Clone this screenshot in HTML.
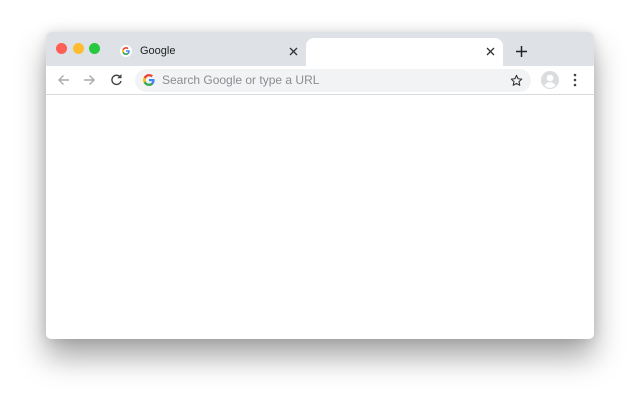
<!DOCTYPE html>
<html><head><meta charset="utf-8"><style>
*{margin:0;padding:0;box-sizing:border-box}
body{width:640px;height:400px;background:#fff;position:relative;overflow:hidden;font-family:"Liberation Sans",sans-serif}
.win{position:absolute;left:46px;top:32px;width:548px;height:307px;background:#fff;border-radius:5px;overflow:hidden;box-shadow:0 18px 30px rgba(0,0,0,.35),0 0 12px rgba(0,0,0,.12)}
.strip{position:absolute;left:0;top:0;width:548px;height:34px;background:#dee1e6}
.dot{position:absolute;top:11px;width:11px;height:11px;border-radius:50%}
.tab{position:absolute;left:260px;top:6px;width:197px;height:28px;background:#fff;border-radius:8px 8px 0 0}
.tb{position:absolute;left:0;top:34px;width:548px;height:29px;background:#fff;border-bottom:1px solid #d7d9dc}
.omni{position:absolute;left:89px;top:3px;width:396px;height:23px;background:#f1f3f4;border-radius:12px}
.t{position:absolute;font-size:11px;color:#222}
svg{position:absolute}
</style></head><body>
<div class="win">
<div class="strip">
<div class="dot" style="left:10px;background:#fe5f57"></div>
<div class="dot" style="left:27px;background:#febc2e"></div>
<div class="dot" style="left:43px;background:#28c840"></div>
<svg style="left:74px;top:13px" width="12" height="12" viewBox="0 0 24 24"><circle cx="12" cy="12" r="12" fill="#fff"/><path d="M19.5 12.2c0-.6-.1-1.1-.2-1.6H12v3h4.2a3.6 3.6 0 0 1-1.6 2.4v2h2.6c1.5-1.4 2.3-3.4 2.3-5.8z" fill="#4285F4"/><path d="M12 20c2.2 0 4-.7 5.2-2l-2.6-2c-.7.5-1.6.8-2.6.8-2 0-3.7-1.4-4.3-3.2H5v2.1A8 8 0 0 0 12 20z" fill="#34A853"/><path d="M7.7 13.6a4.8 4.8 0 0 1 0-3.2V8.3H5a8 8 0 0 0 0 7.4z" fill="#FBBC05"/><path d="M12 7.2c1.2 0 2.2.4 3 1.2l2.3-2.3A8 8 0 0 0 5 8.3l2.7 2.1c.6-1.8 2.3-3.2 4.3-3.2z" fill="#EA4335"/></svg>
<div class="t" style="left:94px;top:13px">Google</div>
<svg style="left:243px;top:15px" width="9" height="9" viewBox="0 0 9 9"><path d="M1 1L8 8M8 1L1 8" stroke="#333" stroke-width="1.3"/></svg>
<div class="tab"></div>
<svg style="left:440px;top:15px" width="9" height="9" viewBox="0 0 9 9"><path d="M1 1L8 8M8 1L1 8" stroke="#333" stroke-width="1.3"/></svg>
<svg style="left:470px;top:14px" width="11" height="11" viewBox="0 0 11 11"><path d="M5.5 0V11M0 5.5H11" stroke="#222" stroke-width="1.5"/></svg>
</div>
<div class="tb">
<svg style="left:11px;top:8px" width="13" height="12" viewBox="0 0 13 12"><path d="M12 6H2M6.5 1.5L2 6l4.5 4.5" stroke="#aaa" stroke-width="1.4" fill="none"/></svg>
<svg style="left:37px;top:8px" width="13" height="12" viewBox="0 0 13 12"><path d="M1 6H11M6.5 1.5L11 6l-4.5 4.5" stroke="#aaa" stroke-width="1.4" fill="none"/></svg>
<svg style="left:64px;top:7px" width="13" height="13" viewBox="0 0 13 13"><path d="M10.5 4.5A4.6 4.6 0 1 0 11 8" stroke="#444" stroke-width="1.4" fill="none"/><path d="M11.5 1v4.3H7.2z" fill="#444"/></svg>
<div class="omni">
<svg style="left:8px;top:5px" width="12" height="12" viewBox="4 4 16 16"><path d="M19.5 12.2c0-.6-.1-1.1-.2-1.6H12v3h4.2a3.6 3.6 0 0 1-1.6 2.4v2h2.6c1.5-1.4 2.3-3.4 2.3-5.8z" fill="#4285F4"/><path d="M12 20c2.2 0 4-.7 5.2-2l-2.6-2c-.7.5-1.6.8-2.6.8-2 0-3.7-1.4-4.3-3.2H5v2.1A8 8 0 0 0 12 20z" fill="#34A853"/><path d="M7.7 13.6a4.8 4.8 0 0 1 0-3.2V8.3H5a8 8 0 0 0 0 7.4z" fill="#FBBC05"/><path d="M12 7.2c1.2 0 2.2.4 3 1.2l2.3-2.3A8 8 0 0 0 5 8.3l2.7 2.1c.6-1.8 2.3-3.2 4.3-3.2z" fill="#EA4335"/></svg>
<div class="t" style="left:27px;top:4px;font-size:12px;color:#8a8d91">Search Google or type a URL</div>
<svg style="left:375px;top:5px" width="13" height="13" viewBox="0 0 24 24"><path d="M12 2.5l2.9 6.3 6.8.7-5.1 4.6 1.5 6.8L12 17.4l-6.1 3.5 1.5-6.8-5.1-4.6 6.8-.7z" stroke="#333" stroke-width="2" fill="none" stroke-linejoin="round"/></svg>
</div>
<svg style="left:495px;top:5px" width="18" height="18" viewBox="0 0 18 18"><circle cx="9" cy="9" r="9" fill="#dadce0"/><circle cx="9" cy="7" r="3.3" fill="#fff"/><path d="M3.5 14.5c1.3-2.4 3.3-3.3 5.5-3.3s4.2.9 5.5 3.3A7.5 7.5 0 0 1 3.5 14.5z" fill="#fff"/></svg>
<svg style="left:527px;top:7px" width="4" height="14" viewBox="0 0 4 14"><circle cx="2" cy="2" r="1.3" fill="#444"/><circle cx="2" cy="7" r="1.3" fill="#444"/><circle cx="2" cy="12" r="1.3" fill="#444"/></svg>
</div>
</div>
</body></html>
